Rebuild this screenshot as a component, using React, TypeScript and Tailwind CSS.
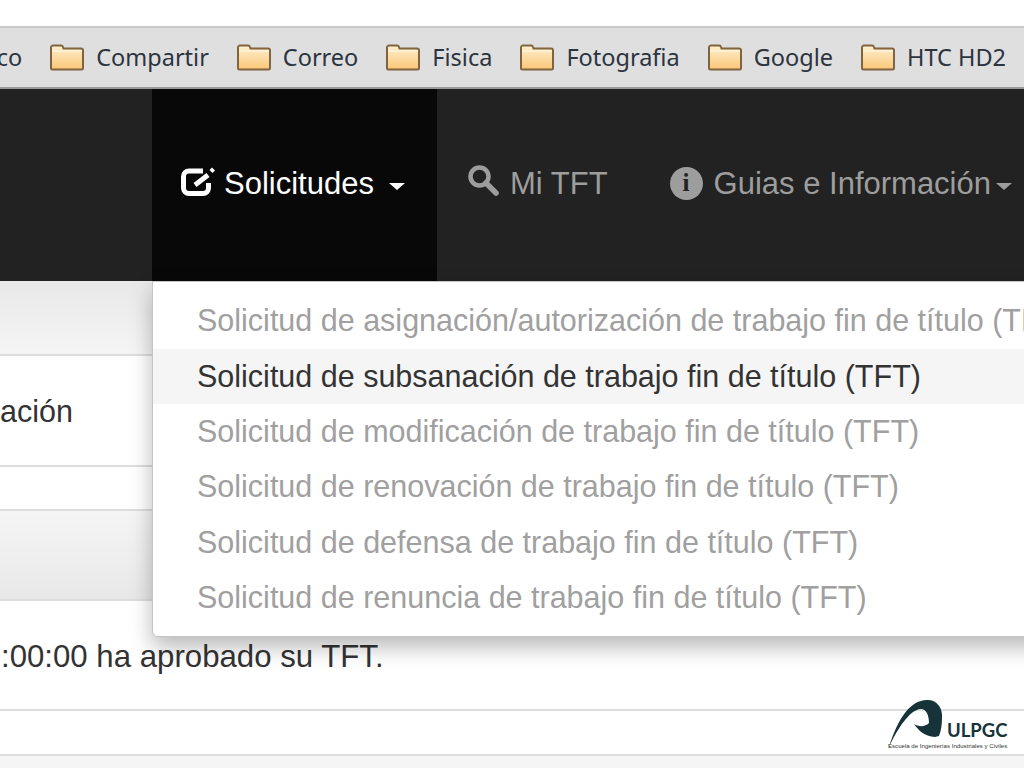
const bookmarks = ["Compartir", "Correo", "Fisica", "Fotografia", "Google", "HTC HD2"];

const requests = [
  "Solicitud de asignación/autorización de trabajo fin de título (TFT)",
  "Solicitud de subsanación de trabajo fin de título (TFT)",
  "Solicitud de modificación de trabajo fin de título (TFT)",
  "Solicitud de renovación de trabajo fin de título (TFT)",
  "Solicitud de defensa de trabajo fin de título (TFT)",
  "Solicitud de renuncia de trabajo fin de título (TFT)",
];

function FolderIcon() {
  return (
    <svg width="34" height="28" viewBox="0 0 34 28" className="shrink-0">
      <defs>
        <linearGradient id="folderFill" x1="0" y1="0" x2="0" y2="1">
          <stop offset="0" stopColor="#fdf0cf" />
          <stop offset="1" stopColor="#fbc778" />
        </linearGradient>
      </defs>
      <path
        d="M2.5 25.5 a1.5 1.5 0 0 1 -1.5 -1.5 V3.5 a2 2 0 0 1 2 -2 h8 a2 2 0 0 1 2 1.5 l0.5 1.5 H31 a2 2 0 0 1 2 2 V24 a1.500 1.500 0 0 1 -1.500 1.500 z"
        fill="url(#folderFill)"
        stroke="#80643f"
        strokeWidth="2"
      />
      <path d="M2 7 H32" stroke="#fdf3dc" strokeWidth="1.500" />
    </svg>
  );
}

function Caret({ className }: { className: string }) {
  return <span className={`inline-block border-x-[8px] border-t-[7px] border-x-transparent ${className}`} />;
}

export default function App() {
  return (
    <div className="relative h-[768px] w-[1024px] overflow-hidden bg-white font-['Liberation_Sans',sans-serif]">
      <div className="h-[26px] bg-white" />

      {/* Browser bookmarks bar */}
      <div className="flex h-[63px] items-center justify-end gap-[28px] overflow-hidden whitespace-nowrap border-y-2 border-t-[#c9c9c9] border-b-[#9a9a9a] bg-[#dfdfdf] pr-[18px] font-['Noto_Sans',sans-serif] text-[23.500px] text-[#2c3440]">
        <span>co</span>
        {bookmarks.map((name) => (
          <div key={name} className="flex items-center gap-[12px]">
            <FolderIcon />
            <span>{name}</span>
          </div>
        ))}
      </div>

      {/* Navbar */}
      <nav className="flex h-[192px] bg-[#222222] pl-[152px] text-[31px]">
        <div className="flex w-[285px] items-center bg-[#080808] pl-[28px] text-white">
          <svg width="37" height="34" viewBox="0 0 37 34" className="mr-[7px] shrink-0 -translate-y-[2px]">
            <path d="M23 5 H9 a5.500 5.500 0 0 0 -5.500 5.500 V22 a5.500 5.500 0 0 0 5.500 5.500 H23 a5.500 5.500 0 0 0 5.500 -5.500 V17" fill="none" stroke="#fff" strokeWidth="5" />
            <path d="M15 19 L28 9" fill="none" stroke="#fff" strokeWidth="5" />
            <path d="M29.500 4 l2.500 -2.500 l3 3 l-2.500 2.500 z" fill="#fff" />
          </svg>
          <span className="-translate-y-[1px]">Solicitudes</span>
          <Caret className="ml-[15px] mt-[3px] border-t-white" />
        </div>
        <div className="flex items-center pl-[31px] text-[#9d9d9d]">
          <svg width="34" height="34" viewBox="0 0 34 34" className="mr-[8px] -translate-y-[3px]">
            <circle cx="11.500" cy="11.500" r="9" fill="none" stroke="#9d9d9d" strokeWidth="4.500" />
            <path d="M18 18 L28 28" fill="none" stroke="#9d9d9d" strokeWidth="5.500" strokeLinecap="round" />
          </svg>
          <span className="-translate-y-[1px]">Mi TFT</span>
        </div>
        <div className="ml-[62px] flex items-center whitespace-nowrap text-[#9d9d9d]">
          <span className="mr-[11px] flex h-[33px] w-[33px] -translate-y-[2px] items-center justify-center rounded-full bg-[#9d9d9d] font-['Liberation_Serif',serif] text-[25px] font-bold text-[#222222]">
            i
          </span>
          <span className="-translate-y-[1px]">Guias e Información</span>
          <Caret className="ml-[5px] mt-[3px] border-t-[#9d9d9d]" />
        </div>
      </nav>

      {/* Panels behind the menu */}
      <main className="text-[31.200px] text-[#333333]">
        <div className="h-[75px] border-b-2 border-[#dddddd] bg-gradient-to-b from-[#e8e8e8] to-[#f5f5f5]" />
        <div className="flex h-[111px] items-center border-b-2 border-[#dddddd] pt-[3px] text-[30.500px]">ación</div>
        <div className="h-[44px] border-b-2 border-[#dddddd]" />
        <div className="h-[90px] border-b-2 border-[#dddddd] bg-gradient-to-b from-[#f5f5f5] to-[#e8e8e8]" />
        <div className="flex h-[110px] items-center border-b-2 border-[#dddddd] pl-[1px] pt-[4px]">:00:00 ha aprobado su TFT.</div>
        <div className="h-[45px] border-b-2 border-[#dddddd]" />
        <div className="h-[12px] bg-[#f5f5f5]" />
      </main>

      {/* Open dropdown menu */}
      <ul className="absolute left-[152px] top-[281px] w-[1000px] rounded-b-[6px] border border-[#c4c4c4] bg-white pb-[10px] pt-[11.500px] text-[30.500px] shadow-[0_10px_22px_rgba(0,0,0,0.28)]">
        {requests.map((item, i) => (
          <li
            key={item}
            className={`flex h-[55.400px] items-center whitespace-nowrap pl-[44px] ${
              i === 1 ? "bg-[#f5f5f5] text-[#333333]" : "text-[#a0a0a0]"
            }`}
          >
            {item}
          </li>
        ))}
      </ul>

      {/* ULPGC logo */}
      <div className="absolute left-[888px] top-[698px] h-[54px] w-[122px]">
        <svg width="58" height="50" viewBox="0 0 58 50" className="absolute left-0 top-0">
          <path
            d="M1 49 C8 27 19 3 38 2 C48 1 55 9 54 20 C54 27 53 33 51 38 L47 39 C36 38 31 33 26 26 C31 29 37 29 41 25 C41 17 38 10 32 11 C21 13 10 30 1 49 z"
            fill="#16333a"
          />
        </svg>
        <div className="absolute left-[59px] top-[22px] font-['Lato',sans-serif] text-[18.500px] font-bold leading-[20px] text-[#16333a]">
          ULPGC
        </div>
        <div className="absolute left-0 top-[43px] whitespace-nowrap text-[6.100px] leading-[9px] text-[#333333]">
          Escuela de Ingenierías Industriales y Civiles
        </div>
      </div>
    </div>
  );
}
